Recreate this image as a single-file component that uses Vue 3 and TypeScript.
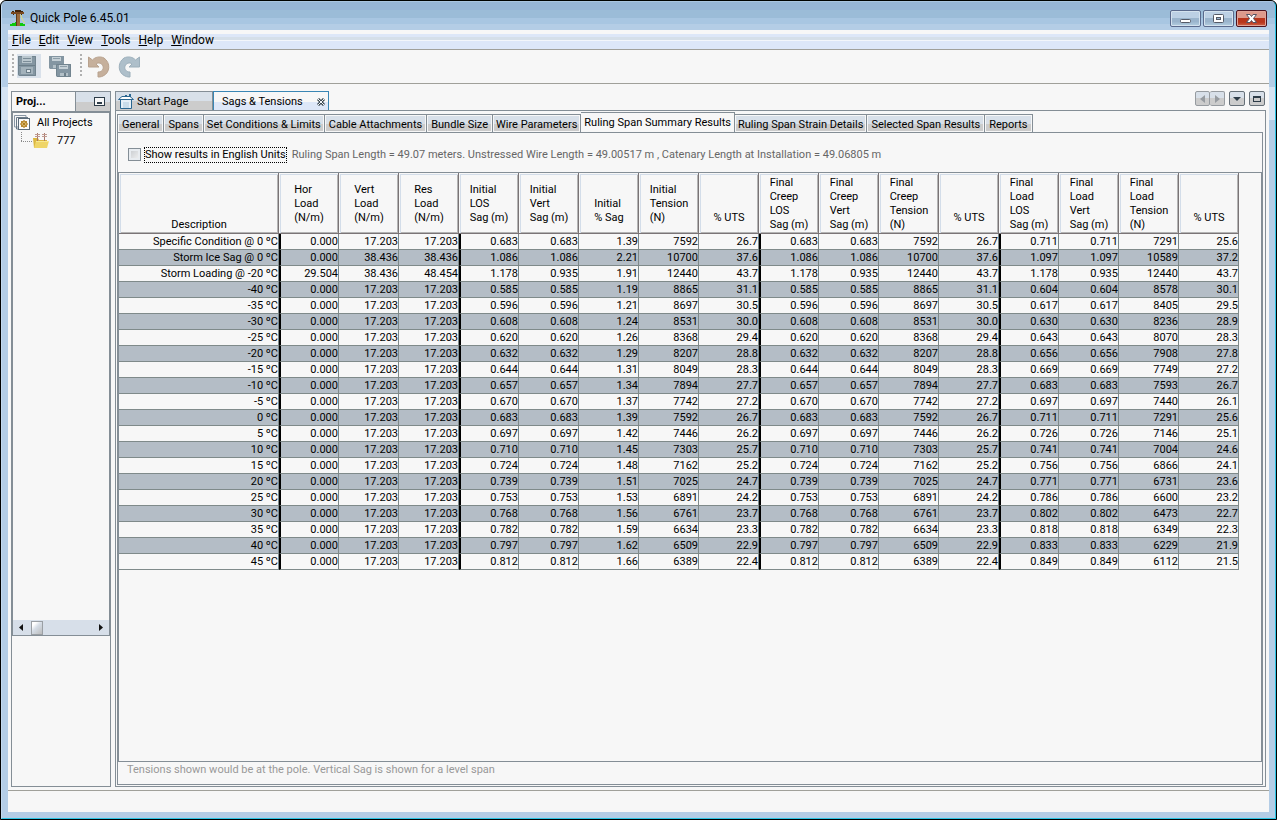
<script setup lang="ts">
import { ref } from 'vue'

interface Header {
  lines: string[]
  low?: boolean
  group?: boolean
}

interface Tab {
  label: string
  tight?: boolean
}

const menus: string[] = ['File', 'Edit', 'View', 'Tools', 'Help', 'Window']

const tabs: Tab[] = [
  { label: 'General' },
  { label: 'Spans' },
  { label: 'Set Conditions & Limits', tight: true },
  { label: 'Cable Attachments' },
  { label: 'Bundle Size' },
  { label: 'Wire Parameters', tight: true },
  { label: 'Ruling Span Summary Results', tight: true },
  { label: 'Ruling Span Strain Details', tight: true },
  { label: 'Selected Span Results' },
  { label: 'Reports' },
]
const activeTab = ref('Ruling Span Summary Results')
const englishUnits = ref(false)

const headers: Header[] = [
  { lines: ['Description'], low: true },
  { lines: ['Hor', 'Load', '(N/m)'], group: true },
  { lines: ['Vert', 'Load', '(N/m)'] },
  { lines: ['Res', 'Load', '(N/m)'] },
  { lines: ['Initial', 'LOS', 'Sag (m)'], group: true },
  { lines: ['Initial', 'Vert', 'Sag (m)'] },
  { lines: ['Initial', '% Sag'] },
  { lines: ['Initial', 'Tension', '(N)'] },
  { lines: ['% UTS'] },
  { lines: ['Final', 'Creep', 'LOS', 'Sag (m)'], low: true, group: true },
  { lines: ['Final', 'Creep', 'Vert', 'Sag (m)'], low: true },
  { lines: ['Final', 'Creep', 'Tension', '(N)'], low: true },
  { lines: ['% UTS'] },
  { lines: ['Final', 'Load', 'LOS', 'Sag (m)'], low: true, group: true },
  { lines: ['Final', 'Load', 'Vert', 'Sag (m)'], low: true },
  { lines: ['Final', 'Load', 'Tension', '(N)'], low: true },
  { lines: ['% UTS'] },
]

// description | horizontal vertical resultant | initial LOS, vert, % sag, tension, % UTS | final load LOS, vert, tension, % UTS
const source: string[] = [
  'Specific Condition @ 0 ºC|0.000 17.203 17.203|0.683 0.683 1.39 7592 26.7|0.711 0.711 7291 25.6',
  'Storm Ice Sag @ 0 ºC|0.000 38.436 38.436|1.086 1.086 2.21 10700 37.6|1.097 1.097 10589 37.2',
  'Storm Loading @ -20 ºC|29.504 38.436 48.454|1.178 0.935 1.91 12440 43.7|1.178 0.935 12440 43.7',
  '-40 ºC|0.000 17.203 17.203|0.585 0.585 1.19 8865 31.1|0.604 0.604 8578 30.1',
  '-35 ºC|0.000 17.203 17.203|0.596 0.596 1.21 8697 30.5|0.617 0.617 8405 29.5',
  '-30 ºC|0.000 17.203 17.203|0.608 0.608 1.24 8531 30.0|0.630 0.630 8236 28.9',
  '-25 ºC|0.000 17.203 17.203|0.620 0.620 1.26 8368 29.4|0.643 0.643 8070 28.3',
  '-20 ºC|0.000 17.203 17.203|0.632 0.632 1.29 8207 28.8|0.656 0.656 7908 27.8',
  '-15 ºC|0.000 17.203 17.203|0.644 0.644 1.31 8049 28.3|0.669 0.669 7749 27.2',
  '-10 ºC|0.000 17.203 17.203|0.657 0.657 1.34 7894 27.7|0.683 0.683 7593 26.7',
  '-5 ºC|0.000 17.203 17.203|0.670 0.670 1.37 7742 27.2|0.697 0.697 7440 26.1',
  '0 ºC|0.000 17.203 17.203|0.683 0.683 1.39 7592 26.7|0.711 0.711 7291 25.6',
  '5 ºC|0.000 17.203 17.203|0.697 0.697 1.42 7446 26.2|0.726 0.726 7146 25.1',
  '10 ºC|0.000 17.203 17.203|0.710 0.710 1.45 7303 25.7|0.741 0.741 7004 24.6',
  '15 ºC|0.000 17.203 17.203|0.724 0.724 1.48 7162 25.2|0.756 0.756 6866 24.1',
  '20 ºC|0.000 17.203 17.203|0.739 0.739 1.51 7025 24.7|0.771 0.771 6731 23.6',
  '25 ºC|0.000 17.203 17.203|0.753 0.753 1.53 6891 24.2|0.786 0.786 6600 23.2',
  '30 ºC|0.000 17.203 17.203|0.768 0.768 1.56 6761 23.7|0.802 0.802 6473 22.7',
  '35 ºC|0.000 17.203 17.203|0.782 0.782 1.59 6634 23.3|0.818 0.818 6349 22.3',
  '40 ºC|0.000 17.203 17.203|0.797 0.797 1.62 6509 22.9|0.833 0.833 6229 21.9',
  '45 ºC|0.000 17.203 17.203|0.812 0.812 1.66 6389 22.4|0.849 0.849 6112 21.5',
]

// The creep columns repeat the initial ones, without the % sag value.
const rows: string[][] = source.map((line) => {
  const [name, loads, initial, final] = line.split('|')
  const first = initial.split(' ')
  const creep = first.filter((_, i) => i !== 2)
  return [name, ...loads.split(' '), ...first, ...creep, ...final.split(' ')]
})
</script>

<template>
  <div class="window">
    <div class="frame">
      <header class="titlebar">
        <svg class="app-icon" width="16" height="17" viewBox="0 0 16 17" aria-hidden="true">
          <path d="M11 4c0 4 2 7 4 9" stroke="#e8e070" fill="none" />
          <path d="M0 16v-2h2v-1h3v-1h2v4zM9 16v-3h4v1h2v2z" fill="#0fca0f" />
          <rect x="6" y="1" width="4" height="15" fill="#9a6a3c" />
          <path d="M6 1h1v15H6z" fill="#5c3a18" />
          <rect x="1" y="2" width="13" height="2" fill="#7a4a20" />
          <path d="M2 1h2v1H2zM11 1h2v1h-2zM5 0h6v2H5zM3 4h1v1H3zM11 4h1v1h-1z" fill="#40240c" />
        </svg>
        <h1>Quick Pole 6.45.01</h1>
        <div class="window-buttons">
          <button type="button" aria-label="Minimize">
            <svg width="29" height="15" viewBox="0 0 29 15"><rect x="9.500" y="8.500" width="10" height="3" rx="1" fill="#fff" stroke="#555a66" /></svg>
          </button>
          <button type="button" aria-label="Maximize">
            <svg width="29" height="15" viewBox="0 0 29 15"><rect x="9.500" y="3.500" width="10" height="8" rx="1" fill="#fff" stroke="#555a66" /><rect x="12.500" y="6.500" width="4" height="2" fill="#9ab6d2" stroke="#555a66" /></svg>
          </button>
          <button type="button" class="close" aria-label="Close">
            <svg width="29" height="15" viewBox="0 0 29 15"><path d="M9.500 3.500h3.500l1.500 2 1.500-2h3.500l-3 4 3 4H16l-1.500-2-1.500 2H9.500l3-4z" fill="#fff" stroke="#545464" /></svg>
          </button>
        </div>
      </header>

      <div class="client">
        <nav class="menubar">
          <button v-for="menu in menus" :key="menu" type="button"><u>{{ menu[0] }}</u>{{ menu.slice(1) }}</button>
        </nav>

        <div class="toolbar">
          <span class="grip"></span>
          <button type="button" class="tool hot" aria-label="Save">
            <svg width="20" height="20" viewBox="0 0 20 20">
              <path d="M1 0h18v20H2l-1-1z" fill="#8496a2" />
              <path d="M1.500 .5h17v19h-16l-1-1z" fill="none" stroke="#72848f" />
              <path d="M5 0h10v7H5z" fill="#b9c6cd" />
              <path d="M6 2.500h8M6 5.500h8" stroke="#7b8c97" />
              <path d="M2 9.500h16" stroke="#6c7e89" />
              <path d="M4 11h12v7H4z" fill="#a3b2bb" />
              <path d="M9 13h5v4H9z" fill="#6c7e89" /><path d="M10 14h3v2h-3z" fill="#dfe6ea" />
            </svg>
          </button>
          <button type="button" class="tool save-all" aria-label="Save all">
            <svg width="22" height="22" viewBox="0 0 22 22">
              <path d="M0 0h15v13H1l-1-1z" fill="#8496a2" />
              <path d="M3 1h9v4H3z" fill="#c5d0d6" /><path d="M4 2.500h7" stroke="#8d9da7" />
              <path d="M4 9h8v3H4z" fill="#b3c0c7" />
              <path d="M7 8h15v13H8l-1-1z" fill="#8496a2" />
              <path d="M7.500 8.500h14v12h-13l-1-1z" fill="none" stroke="#72848f" />
              <path d="M10 9h9v4h-9z" fill="#c5d0d6" /><path d="M11 10.500h7" stroke="#8d9da7" />
              <path d="M11 17h8v3h-8z" fill="#b3c0c7" /><path d="M15 17h2v3h-2z" fill="#6c7e89" />
            </svg>
          </button>
          <span class="grip second"></span>
          <button type="button" class="tool" aria-label="Undo">
            <svg width="22" height="22" viewBox="0 0 22 22">
              <path d="M.5 1l4 3C7 1 12 0 16 2c7 5 6 15-1 18-2 1-4 1-5 1v-5c4 0 6-3 5-6-1-3-5-4-7-2l3 3H.5z" fill="#c6b09c" stroke="#b8a28e" />
            </svg>
          </button>
          <button type="button" class="tool redo" aria-label="Redo">
            <svg width="22" height="22" viewBox="0 0 22 22">
              <path d="M21.500 1l-4 3C15 1 10 0 6 2c-7 5-6 15 1 18 2 1 4 1 5 1v-5c-4 0-6-3-5-6 1-3 5-4 7-2l-3 3h10.500z" fill="#aebfca" stroke="#9cafbb" />
            </svg>
          </button>
        </div>

        <main class="workspace">
          <aside class="projects">
            <div class="projects-head">
              <h2>Proj...</h2>
              <button type="button" aria-label="Minimize panel">
                <svg width="11" height="9" viewBox="0 0 11 9"><rect x=".5" y=".5" width="10" height="8" fill="#f7f7f7" stroke="#2d3c48" /><path d="M3 5h5v2H3z" fill="#2d3c48" /></svg>
              </button>
            </div>
            <div class="tree-pane">
              <ul class="tree">
                <li>
                  <svg width="17" height="16" viewBox="0 0 17 16">
                    <path d="M.5 12V.5H12V3M.5 12H4" fill="none" stroke="#8896a4" />
                    <path d="M2.500 14V2.500H14M2.500 14H5" fill="none" stroke="#6a7a88" />
                    <rect x="4.500" y="3.500" width="11" height="11" fill="#fafafa" stroke="#5c6c7a" />
                    <circle cx="10" cy="9" r="3" fill="#f6e2a0" stroke="#b98a2e" />
                    <path d="M10 5v8M6 9h8M7 6l6 6M13 6l-6 6" stroke="#a87418" stroke-width=".8" />
                  </svg>
                  <span>All Projects</span>
                </li>
                <li class="child">
                  <svg width="16" height="16" viewBox="0 0 16 16">
                    <path d="M0 5h5l1 2h8v8H1z" fill="#dcb840" />
                    <path d="M4.500 0v8M11.500 0v8" stroke="#a8786a" />
                    <path d="M2 1.500h5M9 1.500h5M2 3.500h5M9 3.500h5" stroke="#c09a90" />
                    <path d="M3 8h13l-2 7H1z" fill="#efd568" /><path d="M3 8.500h13" stroke="#f8e890" />
                  </svg>
                  <span>777</span>
                </li>
              </ul>
              <div class="scrollbar">
                <button type="button" aria-label="Scroll left"><svg width="5" height="7" viewBox="0 0 5 7"><path d="M4 0v7L0 3.500z" fill="#111" /></svg></button>
                <span class="thumb"></span>
                <button type="button" class="right" aria-label="Scroll right"><svg width="5" height="7" viewBox="0 0 5 7"><path d="M1 0v7l4-3.500z" fill="#111" /></svg></button>
              </div>
            </div>
          </aside>

          <section class="editor">
            <div class="doc-tabs">
              <button type="button" class="doc-tab start">
                <svg width="16" height="15" viewBox="0 0 16 15"><path d="M2.500 6v8.500h11V6" fill="#e6f0f8" stroke="#2a6690" /><path d="M.5 5.500L4 2.500h8l3.500 3z" fill="#fff" stroke="#2a6690" /><path d="M7 1h2v2H7zM11 0h2v3h-2z" fill="#2a6690" /><path d="M5 8h6v6H5z" fill="#c9dcea" /></svg>
                <span>Start Page</span>
              </button>
              <button type="button" class="doc-tab current">
                <span>Sags &amp; Tensions</span>
                <svg width="8" height="8" viewBox="0 0 8 8"><path d="M1 1l6 6M7 1L1 7" stroke="#3d4a52" stroke-width="3" /><path d="M1 1l6 6M7 1L1 7" stroke="#f2f5fa" /></svg>
              </button>
              <div class="doc-controls">
                <span class="pair">
                  <button type="button" aria-label="Previous" disabled><svg width="5" height="8" viewBox="0 0 5 8"><path d="M5 0v8L0 4z" fill="#969ba0" /></svg></button>
                  <button type="button" aria-label="Next" disabled><svg width="5" height="8" viewBox="0 0 5 8"><path d="M0 0v8l5-4z" fill="#969ba0" /></svg></button>
                </span>
                <button type="button" class="square" aria-label="List documents"><svg width="8" height="4" viewBox="0 0 8 4"><path d="M0 0h8L4 4z" fill="#2d3c48" /></svg></button>
                <button type="button" class="square" aria-label="Maximize editor"><svg width="8" height="6" viewBox="0 0 8 6"><rect x=".5" y=".5" width="7" height="5" fill="none" stroke="#2d3c48" /><path d="M0 1h8" stroke="#2d3c48" stroke-width="2" /></svg></button>
              </div>
            </div>

            <div class="doc-body">
              <div class="tabs" role="tablist">
                <button
                  v-for="tab in tabs"
                  :key="tab.label"
                  type="button"
                  role="tab"
                  :aria-selected="tab.label === activeTab"
                  :class="{ active: tab.label === activeTab, tight: tab.tight }"
                  @click="activeTab = tab.label"
                >{{ tab.label }}</button>
              </div>
              <div class="panel">
                <div class="options">
                  <input id="english" v-model="englishUnits" type="checkbox" />
                  <label for="english">Show results in English Units</label>
                  <p>Ruling Span Length = 49.07 meters. Unstressed Wire Length = 49.00517 m , Catenary Length at Installation = 49.06805 m</p>
                </div>
                <div class="table-pane">
                  <table>
                    <colgroup>
                      <col class="wide" />
                      <col v-for="n in headers.length - 1" :key="n" class="narrow" />
                    </colgroup>
                    <thead>
                      <tr>
                        <th v-for="(h, i) in headers" :key="i" scope="col" :class="{ low: h.low }">
                          <div><span><template v-for="(l, k) in h.lines" :key="k"><br v-if="k > 0" />{{ l }}</template></span></div>
                        </th>
                      </tr>
                    </thead>
                    <tbody>
                      <tr v-for="row in rows" :key="row[0]">
                        <td v-for="(cell, c) in row" :key="c" :class="{ group: headers[c].group }">{{ cell }}</td>
                      </tr>
                    </tbody>
                  </table>
                </div>
                <p class="note">Tensions shown would be at the pole. Vertical Sag is shown for a level span</p>
              </div>
            </div>
          </section>
        </main>
        <footer class="status"></footer>
      </div>
    </div>
  </div>
</template>

<style>
body {
  background: #fff;
}
</style>

<style scoped>
.window,
.window * {
  box-sizing: border-box;
}
.window {
  display: flex;
  height: 100vh;
  border: 1px solid #000;
  border-radius: 6px 6px 0 0;
  background: #000;
  font-family: Roboto, "Liberation Sans", sans-serif;
  font-size: 11px;
  line-height: 14px;
  color: #000;
}
h1,
h2,
p,
ul {
  margin: 0;
  padding: 0;
  font: inherit;
}
button {
  margin: 0;
  padding: 0;
  border: 0;
  background: none;
  font: inherit;
  color: inherit;
}
svg {
  display: block;
  flex: none;
}
.frame {
  flex: 1;
  min-width: 0;
  display: flex;
  flex-direction: column;
  padding: 0 6px 6px;
  border: 1px solid #2cc4e4;
  border-top-color: #a9c4e0;
  border-left-color: #c3d9ee;
  border-radius: 5px 5px 0 0;
  background: linear-gradient(#97b5d6 0 8px, #9bbcd8 8px 16px, #a8c6e2 16px 22px, #b4cde6 22px 85px, #d5e3f2 85px 118px, #b4cde6 118px);
}
.titlebar {
  display: flex;
  height: 28px;
  padding: 0 2px;
}
.app-icon {
  margin: 8px 4px 0 0;
}
h1 {
  flex: 1;
  margin-top: 9px;
  font-size: 12px;
}
.window-buttons {
  display: flex;
  gap: 2px;
  padding-top: 8px;
}
.window-buttons button {
  width: 31px;
  height: 17px;
  border: 1px solid #5a6a8c;
  border-radius: 2px;
  background: linear-gradient(#bcd0e4 0 50%, #9ab4cc 50% 70%, #b4cfe0);
  box-shadow: inset 0 0 0 1px #d4e2ee;
}
.window-buttons .close {
  border-color: #4e1420;
  background: linear-gradient(#dd9a8c 0 50%, #b8351c 50% 75%, #d0664a);
  box-shadow: inset 0 0 0 1px #e0a498;
}
.client {
  flex: 1;
  min-height: 0;
  display: flex;
  flex-direction: column;
  background: #f7f7f7;
}
.menubar {
  display: flex;
  gap: 8px;
  height: 20px;
  padding: 0 4px;
  border-bottom: 1px solid #a0a09a;
  background: linear-gradient(#f7f7f7 0 4px, #dde7f8 4px 7px, #d5dfe9 7px 10px, #f3f6fa 10px 11px, #dde7f8 11px);
  font-size: 12px;
}
.toolbar {
  display: flex;
  height: 34px;
  padding: 4px 4px 0;
  border-bottom: 1px solid #a0a09a;
}
.grip {
  width: 2px;
  height: 23px;
  background: repeating-linear-gradient(#b0b0b0 0 2px, transparent 2px 4px);
}
.grip.second {
  margin-left: 7px;
}
.tool {
  width: 24px;
  height: 24px;
  margin-left: 6px;
  padding-top: 2px;
}
.tool.hot {
  margin-left: 3px;
  padding: 0;
  background: #d9e1ea;
}
.tool.save-all {
  margin-left: 8px;
}
.workspace {
  flex: 1;
  min-height: 0;
  display: flex;
  gap: 4px;
  padding: 7px 3px 3px;
}
.projects {
  width: 100px;
  display: flex;
  flex-direction: column;
  border: 1px solid #848e96;
}
.projects-head {
  display: flex;
  height: 21px;
  border-bottom: 2px solid #848e96;
}
h2 {
  flex: 1;
  padding: 3px 4px;
  font-weight: 700;
}
.projects-head button {
  width: 35px;
  padding: 0 0 0 18px;
  border-left: 1px solid #848e96;
  background: linear-gradient(#d8e0e9 0 50%, #ccc 50%);
}
.tree-pane {
  flex: 0 1 523px;
  display: flex;
  flex-direction: column;
  border: solid #848e96;
  border-width: 0 1px 1px;
}
.tree {
  flex: 1;
  padding-top: 1px;
  list-style: none;
}
.tree li {
  display: flex;
  align-items: center;
  gap: 6px;
  height: 18px;
  padding-left: 1px;
}
.tree .child {
  gap: 8px;
  margin-left: 8px;
  padding-left: 12px;
  background: repeating-linear-gradient(90deg, #8a8a8a 0 1px, transparent 1px 2px) 0 9px / 11px 1px no-repeat,
    repeating-linear-gradient(#8a8a8a 0 1px, transparent 1px 2px) 0 0 / 1px 9px no-repeat;
}
.scrollbar {
  display: flex;
  align-items: center;
  height: 15px;
  padding: 0 6px;
  background: #d7dfe9;
}
.thumb {
  width: 12px;
  height: 14px;
  margin-left: 7px;
  border: 1px solid #9a9fa4;
  background: linear-gradient(135deg, #fff 0 20%, #d5dde6 45%, #bbb);
}
.scrollbar .right {
  margin-left: auto;
}
.editor {
  flex: 1;
  min-width: 0;
  display: flex;
  flex-direction: column;
}
.doc-tabs {
  display: flex;
  height: 19px;
}
.doc-tab {
  display: flex;
  align-items: center;
  height: 19px;
  padding-top: 1px;
  border: 1px solid #848e96;
  border-bottom: 0;
}
.start {
  width: 98px;
  padding-left: 2px;
  gap: 3px;
  background: linear-gradient(#d8e0e9 0 50%, #ccc 50%);
}
.current {
  justify-content: space-between;
  width: 116px;
  height: 20px;
  padding: 0 3px 0 8px;
  border-color: #3a86b4;
  background: linear-gradient(#f7f7f7 0 50%, #dde7f8 50%);
}
.doc-controls {
  display: flex;
  gap: 4px;
  margin: 0 1px 0 auto;
}
.pair {
  display: flex;
}
.doc-controls button {
  display: flex;
  align-items: center;
  justify-content: center;
  width: 16px;
  height: 15px;
  border: 1px solid #667078;
  border-radius: 2px;
  background: linear-gradient(#d8e0e9 0 50%, #ccc 50%);
}
.pair button {
  width: 15px;
  border-color: #969ba0;
}
.pair button + button {
  border-left: 0;
}
.doc-body {
  flex: 1;
  min-height: 0;
  display: flex;
  flex-direction: column;
  padding: 1px 2px 1px 1px;
  border: 1px solid #848e96;
}
.tabs {
  display: flex;
  align-items: flex-end;
  height: 20px;
}
.tabs button {
  height: 18px;
  padding: 2px 4px 0;
  border: 1px solid #848e96;
  border-bottom: 0;
  background: linear-gradient(#d8e0e9 0 50%, #ccc 50%);
  box-shadow: inset 0 0 0 1px #f7f7f7;
  white-space: nowrap;
}
.tabs button + button {
  border-left-width: 0;
}
.tabs .tight {
  padding: 2px 3px 0;
}
.tabs .active {
  height: 21px;
  margin-bottom: -1px;
  padding-bottom: 2px;
  background: #f7f7f7;
}
.panel {
  flex: 1;
  min-height: 0;
  display: flex;
  flex-direction: column;
  border: 1px solid #848e96;
}
.options {
  display: flex;
  align-items: center;
  height: 39px;
  padding: 4px 10px 0;
}
.options input {
  appearance: none;
  width: 13px;
  height: 13px;
  margin: 0 4px 0 0;
  border: 1px solid #848e96;
  background: linear-gradient(135deg, #c4c8cc, #f4f4f4);
  box-shadow: inset 0 0 0 2px #e8ecf0;
}
.options label {
  outline: 1px dotted #000;
}
.options p {
  margin-left: 6px;
  color: #666;
}
.table-pane {
  flex: 1;
  min-height: 0;
  border: 1px solid #848e96;
}
table {
  table-layout: fixed;
  width: 1120px;
  border-collapse: separate;
  border-spacing: 0;
}
.wide {
  width: 160px;
}
.narrow {
  width: 60px;
}
th {
  height: 61px;
  padding: 0 0 8px 1px;
  border: 1px solid #7a7476;
  border-top-width: 0;
  border-left-width: 0;
  box-shadow: inset 1px 1px #f7f7f7, inset 2px 2px #d3dde9, inset -1px -1px #b4b4b4;
  font-weight: 400;
  vertical-align: bottom;
}
th.low {
  padding-bottom: 1px;
}
th div {
  display: flex;
  justify-content: center;
}
th span {
  text-align: left;
}
td {
  height: 16px;
  padding: 0;
  border: solid #7f8a8a;
  border-width: 0 1px 1px 0;
  line-height: 15px;
  text-align: right;
  white-space: nowrap;
}
td.group {
  border-left: 2px solid #000;
}
tbody tr:nth-child(even) {
  background: #b4bdc6;
}
.note {
  height: 22px;
  padding: 1px 9px;
  color: #999;
}
.status {
  height: 22px;
  border-top: 1px solid #a0a09a;
}
</style>
